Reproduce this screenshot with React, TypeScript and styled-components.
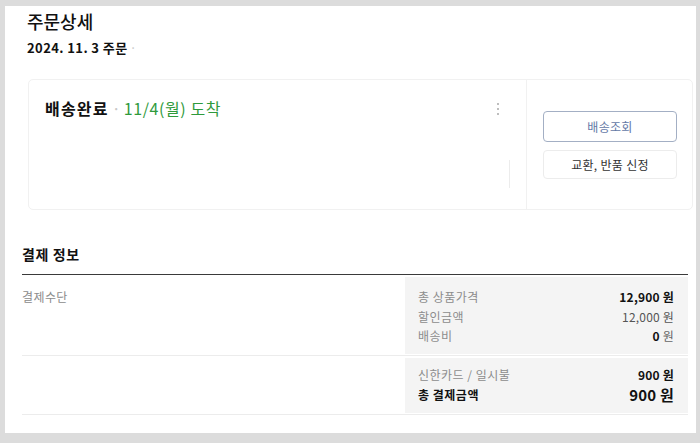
import React from "react";
import styled, { createGlobalStyle } from "styled-components";

const Global = createGlobalStyle`
  html, body { margin: 0; padding: 0; background: #dcdcdc; }
  body { font-family: "Noto Sans CJK KR", "Noto Sans", sans-serif; color: #222; }
  * { box-sizing: border-box; }
`;

const Page = styled.div`
  width: 700px;
  height: 443px;
  padding: 6px 4px 10px 5px;
`;

const Panel = styled.div`
  background: #fff;
  height: 427px;
  display: flex;
  flex-direction: column;
`;

const Header = styled.div`
  padding: 3px 0 0 22px;
  display: flex;
  flex-direction: column;
`;

const Title = styled.h1`
  margin: 0;
  font-size: 18px;
  line-height: 24px;
  font-weight: 500;
  color: #111;
`;

const OrderDate = styled.div`
  margin-top: 5px;
  font-size: 13px;
  line-height: 19px;
  font-weight: 700;
  letter-spacing: 0.4px;
  color: #111;
`;

const Sep = styled.span<{ $gap?: number }>`
  color: #c8c8c8;
  font-weight: 400;
  margin: 0 ${(p) => p.$gap ?? 3}px;
`;

const Card = styled.div`
  margin: 22px 3px 0 23px;
  height: 131px;
  border: 1px solid #f1f1f1;
  border-radius: 5px;
  display: flex;
`;

const CardMain = styled.div`
  position: relative;
  flex: 1;
  padding: 17px 0 0 16px;
  border-right: 1px solid #f1f1f1;
`;

const StatusRow = styled.div`
  display: flex;
  align-items: center;
  font-size: 16px;
  line-height: 22px;
`;

const Status = styled.span`
  font-weight: 700;
  letter-spacing: 1.2px;
  color: #111;
`;

const Arrival = styled.span`
  color: #2f9a3c;
  letter-spacing: 0.6px;
`;

const Kebab = styled.div`
  position: absolute;
  top: 23px;
  right: 27px;
  display: flex;
  flex-direction: column;
  gap: 3px;
  & > i {
    display: block;
    width: 2px;
    height: 2px;
    border-radius: 50%;
    background: #a8a8a8;
  }
`;

const FaintLine = styled.div`
  position: absolute;
  left: 480px;
  top: 80px;
  width: 1px;
  height: 28px;
  background: #ececec;
`;

const CardSide = styled.div`
  width: 165px;
  padding: 0 15px 0 16px;
  display: flex;
  flex-direction: column;
  justify-content: center;
  gap: 8px;
`;

const Button = styled.button<{ $primary?: boolean }>`
  height: ${(p) => (p.$primary ? 31 : 29)}px;
  border-radius: 4px;
  background: #fff;
  border: 1px solid ${(p) => (p.$primary ? "#a3afc4" : "#ececec")};
  color: ${(p) => (p.$primary ? "#6378a6" : "#333")};
  font-family: inherit;
  font-size: 12px;
  letter-spacing: 0.3px;
  padding: 0;
  cursor: pointer;
`;

const Payment = styled.div`
  margin-top: 35px;
  padding: 0 8px 0 17px;
  display: flex;
  flex-direction: column;
`;

const SectionTitle = styled.div`
  font-size: 14px;
  line-height: 19px;
  font-weight: 700;
  letter-spacing: 0.6px;
  color: #111;
  padding-bottom: 10px;
  border-bottom: 1px solid #3a3a3a;
`;

const Row = styled.div`
  display: flex;
  padding: 2px 0 1px;
  border-bottom: 1px solid #ececec;
`;

const RowLabel = styled.div`
  flex: 1;
  padding-top: 11px;
  font-size: 12px;
  line-height: 18px;
  letter-spacing: 0.4px;
  color: #8c8c8c;
`;

const Summary = styled.div<{ $pt: number; $pb: number }>`
  width: 283px;
  background: #f4f4f4;
  padding: ${(p) => p.$pt}px 14px ${(p) => p.$pb}px 13px;
  display: flex;
  flex-direction: column;
`;

const Line = styled.div<{ $big?: boolean }>`
  display: flex;
  justify-content: space-between;
  align-items: center;
  height: ${(p) => (p.$big ? 21 : 19.5)}px;
  font-size: 12px;
`;

const Key = styled.span<{ $strong?: boolean }>`
  color: ${(p) => (p.$strong ? "#111" : "#8c8c8c")};
  font-weight: ${(p) => (p.$strong ? 700 : 400)};
  letter-spacing: 0.5px;
`;

const Val = styled.span<{ $bold?: boolean; $big?: boolean }>`
  color: ${(p) => (p.$bold ? "#111" : "#555")};
  font-weight: ${(p) => (p.$bold ? 700 : 400)};
  font-size: ${(p) => (p.$big ? 15 : 12)}px;
  letter-spacing: 0.2px;
`;

const Unit = styled.span`
  font-weight: 400;
  color: #666;
`;

export default function App() {
  return (
    <>
      <Global />
      <Page>
        <Panel>
          <Header>
            <Title>주문상세</Title>
            <OrderDate>
              2024. 11. 3 주문<Sep $gap={2}>·</Sep>
            </OrderDate>
          </Header>
          <Card>
            <CardMain>
              <StatusRow>
                <Status>배송완료</Status>
                <Sep>·</Sep>
                <Arrival>11/4(월) 도착</Arrival>
              </StatusRow>
              <Kebab>
                <i />
                <i />
                <i />
              </Kebab>
              <FaintLine />
            </CardMain>
            <CardSide>
              <Button $primary>배송조회</Button>
              <Button>교환, 반품 신정</Button>
            </CardSide>
          </Card>
          <Payment>
            <SectionTitle>결제 정보</SectionTitle>
            <Row>
              <RowLabel>결제수단</RowLabel>
              <Summary $pt={10} $pb={8}>
                <Line>
                  <Key>총 상품가격</Key>
                  <Val $bold>12,900 원</Val>
                </Line>
                <Line>
                  <Key>할인금액</Key>
                  <Val>12,000 원</Val>
                </Line>
                <Line>
                  <Key>배송비</Key>
                  <Val $bold>
                    0 <Unit>원</Unit>
                  </Val>
                </Line>
              </Summary>
            </Row>
            <Row>
              <RowLabel />
              <Summary $pt={7} $pb={8}>
                <Line>
                  <Key>신한카드 / 일시불</Key>
                  <Val $bold>900 원</Val>
                </Line>
                <Line $big>
                  <Key $strong>총 결제금액</Key>
                  <Val $bold $big>900 원</Val>
                </Line>
              </Summary>
            </Row>
          </Payment>
        </Panel>
      </Page>
    </>
  );
}
